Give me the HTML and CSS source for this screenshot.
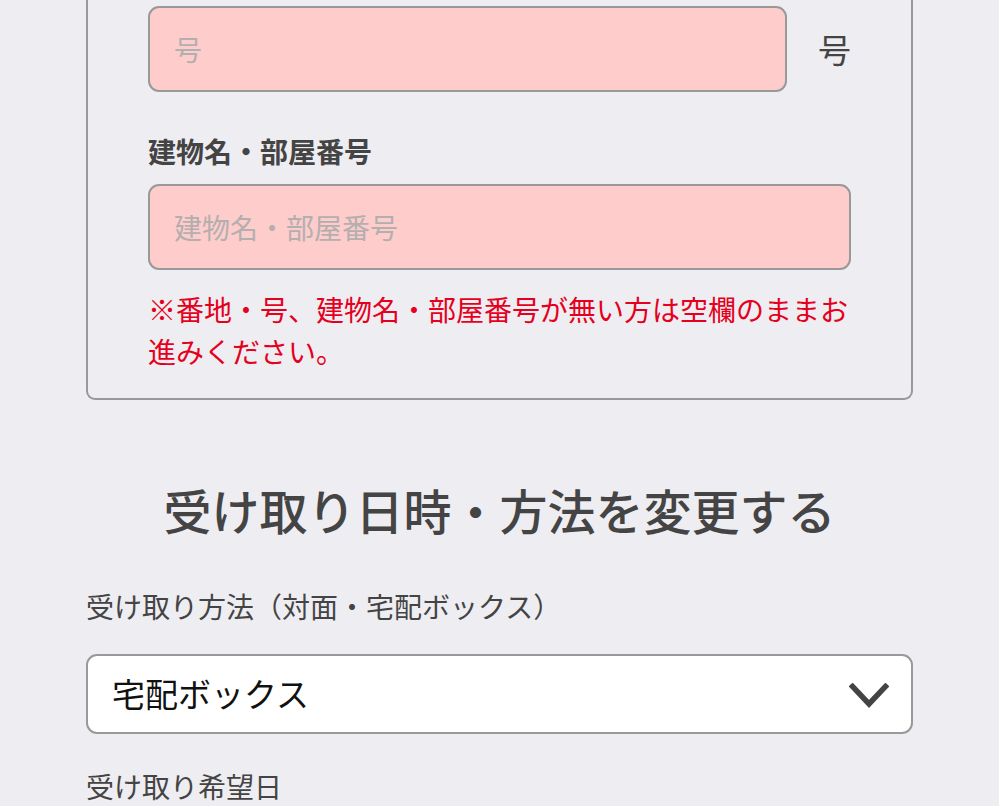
FILE: index.html
```html
<!DOCTYPE html>
<html lang="ja">
<head>
    <meta charset="utf-8">
    <title>お届け先・受け取り方法の変更</title>
    <link rel="stylesheet" href="styles.css">
</head>
<body>
    <div class="page">
        <div class="address-card">
            <div class="field-row">
                <input class="text-input error" type="text" placeholder="号">
                <span class="suffix">号</span>
            </div>

            <label class="field-label bold">建物名・部屋番号</label>
            <input class="text-input error full" type="text" placeholder="建物名・部屋番号">

            <p class="note">※番地・号、建物名・部屋番号が無い方は空欄のままお進みください。</p>
        </div>

        <h2 class="section-title">受け取り日時・方法を変更する</h2>

        <label class="field-label">受け取り方法（対面・宅配ボックス）</label>
        <div class="select-box">
            <span>宅配ボックス</span>
            <svg class="chevron" width="40" height="26" viewBox="0 0 40 26">
                <path d="M3.5 3.5 L20 21 L36.5 3.5" fill="none" stroke="#444" stroke-width="5.5" stroke-linecap="square" stroke-linejoin="miter"/>
            </svg>
        </div>

        <label class="field-label date-label">受け取り希望日</label>
    </div>
</body>
</html>
```

FILE: styles.css
```css
* {
    margin: 0;
    padding: 0;
    box-sizing: border-box;
}

body {
    background: #eeedf2;
    font-family: "Noto Sans CJK JP", "Noto Sans", sans-serif;
    color: #444;
    overflow: hidden;
}

.page {
    width: 827px;
    margin: 0 auto;
}

/* address block (its upper part sits above the fold) */
.address-card {
    border: 2px solid #999;
    border-top: 0;
    border-radius: 0 0 9px 9px;
    padding: 6px 60px 26px;
}

.field-row {
    display: flex;
    align-items: center;
}

.field-row .text-input {
    flex: 1;
}

.suffix {
    width: 33px;
    margin-left: 31px;
    font-size: 33px;
    line-height: 1;
    color: #444;
}

.text-input {
    display: block;
    height: 86px;
    padding: 0 24px;
    border: 2px solid #999;
    border-radius: 11px;
    font-family: inherit;
    font-size: 28px;
    color: #222;
    outline: none;
}

.text-input.full {
    width: 100%;
}

.text-input.error {
    background: #ffcccc;
}

.text-input::placeholder {
    color: #b4afaf;
}

.field-label {
    display: block;
    font-size: 28px;
    line-height: 42px;
    color: #444;
}

.field-label.bold {
    font-weight: 700;
    margin: 38px 0 12px;
}

.note {
    margin-top: 18px;
    font-size: 28px;
    line-height: 42px;
    color: #e50020;
}

.section-title {
    margin: 73px 0 40px;
    text-align: center;
    font-size: 48px;
    line-height: 72px;
    font-weight: 500;
    color: #444;
}

.select-box {
    display: flex;
    align-items: center;
    justify-content: space-between;
    height: 80px;
    margin-top: 27px;
    padding: 0 22px 0 24px;
    background: #fff;
    border: 2px solid #999;
    border-radius: 11px;
    font-size: 33px;
    color: #111;
}

.select-box span {
    margin-top: -3px;
}

.chevron {
    display: block;
    margin-top: 4px;
}

.date-label {
    margin-top: 31px;
}
```
